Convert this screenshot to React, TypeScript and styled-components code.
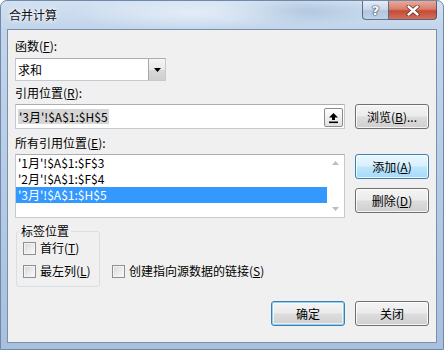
import { FC, ReactNode } from "react";
import styled, { createGlobalStyle, css } from "styled-components";

const GlobalStyle = createGlobalStyle`
    html, body {
        margin: 0;
        padding: 0;
        background: #ffffff;
    }
    body {
        font-family: "Noto Sans CJK SC", "Noto Sans", sans-serif;
        font-size: 12px;
        color: #000000;
    }
    * {
        box-sizing: border-box;
    }
`;

const Window = styled.div`
    width: 444px;
    height: 350px;
    display: flex;
    flex-direction: column;
    border: 1px solid #7089a8;
    border-radius: 7px 7px 0 0;
    overflow: hidden;
    background:
        radial-gradient(ellipse 120px 18px at 190px 12px, rgba(235, 242, 250, 0.75), transparent),
        radial-gradient(ellipse 90px 14px at 300px 10px, rgba(150, 178, 210, 0.5), transparent),
        linear-gradient(180deg, #d3e1f1 0%, #c2d5eb 8%, #b6cce6 50%, #a8c0de 100%);
`;

const TitleBar = styled.div`
    height: 28px;
    display: flex;
    align-items: flex-start;
    justify-content: space-between;
    padding: 0 6px 0 8px;
`;

const Title = styled.span`
    line-height: 28px;
    font-size: 12px;
    color: #111111;
    text-shadow: 0 0 6px rgba(255, 255, 255, 0.95), 0 0 3px rgba(255, 255, 255, 0.9);
`;

const CaptionGroup = styled.div`
    display: flex;
`;

const CaptionButton = styled.div<{ $close?: boolean }>`
    height: 19px;
    display: flex;
    align-items: center;
    justify-content: center;
    border: 1px solid rgba(55, 75, 105, 0.75);
    border-top: 0;
    ${({ $close }) =>
        $close
            ? css`
                  width: 48px;
                  border-left: 0;
                  border-radius: 0 0 4px 0;
                  background: linear-gradient(180deg, #e9a999 0%, #d7806e 45%, #c64a35 55%, #d1715c 100%);
              `
            : css`
                  width: 27px;
                  border-radius: 0 0 0 4px;
                  background: linear-gradient(180deg, #e4ecf6 0%, #cbd9ea 45%, #b3c6dd 55%, #c0d1e6 100%);
              `}
`;

const HelpGlyph = styled.span`
    font-family: "DejaVu Sans", sans-serif;
    font-weight: bold;
    font-size: 13px;
    line-height: 1;
    color: #ffffff;
    text-shadow: 0 0 1px #344a66, 0 0 1px #344a66, 0 0 2px #344a66;
`;

const Client = styled.div`
    margin: 0 6px;
    height: 314px;
    background: #f0f0f0;
    border: 1px solid #7d8fa7;
    display: flex;
    flex-direction: column;
    padding: 9px 7px 0 7px;
`;

const FieldLabel = styled.div<{ $gap?: number }>`
    line-height: 14px;
    height: 14px;
    margin-top: ${({ $gap }) => $gap ?? 0}px;
    white-space: nowrap;
`;

const Row = styled.div<{ $gap: number }>`
    display: flex;
    justify-content: space-between;
    align-items: flex-start;
    margin-top: ${({ $gap }) => $gap}px;
`;

const fieldBorder = css`
    border: 1px solid #c5cad2;
    border-top-color: #abadb3;
    background: #ffffff;
`;

const SelectBox = styled.div`
    ${fieldBorder};
    margin-top: 5px;
    width: 151px;
    height: 23px;
    display: flex;
    align-items: stretch;
`;

const SelectValue = styled.span`
    flex: 1;
    padding-left: 2px;
    line-height: 21px;
`;

const DropButton = styled.span`
    width: 17px;
    display: flex;
    align-items: center;
    justify-content: center;
    border-left: 1px solid #a7a7a7;
    background: linear-gradient(180deg, #f6f6f6 0%, #e8e8e8 50%, #d8d8d8 51%, #cfcfcf 100%);
`;

const TextInput = styled.div`
    ${fieldBorder};
    width: 330px;
    height: 25px;
    display: flex;
    align-items: center;
    justify-content: space-between;
    padding: 0 1px 0 2px;
`;

const SelectedText = styled.span`
    background: #d6d6d6;
    line-height: 15px;
    padding: 0 1px;
`;

const CollapseButton = styled.span`
    width: 19px;
    height: 19px;
    margin-top: 2px;
    display: flex;
    align-items: center;
    justify-content: center;
    border: 1px solid #8a8a8a;
    border-radius: 2px;
    background: linear-gradient(180deg, #ffffff 0%, #f0f0f0 50%, #e2e2e2 100%);
`;

const ListBox = styled.div`
    ${fieldBorder};
    width: 330px;
    height: 64px;
    display: flex;
`;

const ListItems = styled.div`
    flex: 1;
    display: flex;
    flex-direction: column;
`;

const ListItem = styled.div<{ $selected?: boolean }>`
    line-height: 16px;
    height: 16px;
    padding-left: 2px;
    ${({ $selected }) =>
        $selected &&
        css`
            background: #3399ff;
            color: #ffffff;
        `}
`;

const ScrollTrack = styled.div`
    width: 17px;
    display: flex;
    flex-direction: column;
    justify-content: space-between;
    align-items: center;
    padding: 6px 0 6px;
`;

const ButtonStack = styled.div`
    display: flex;
    flex-direction: column;
    gap: 9px;
`;

const DialogButton = styled.div<{ $variant?: "normal" | "hot" | "default" }>`
    width: 74px;
    height: 25px;
    display: flex;
    align-items: center;
    justify-content: center;
    border-radius: 3px;
    white-space: nowrap;
    border: 1px solid #707070;
    box-shadow: inset 0 0 0 1px rgba(255, 255, 255, 0.75);
    background: linear-gradient(180deg, #f4f4f4 0%, #ebebeb 48%, #dddddd 52%, #cfcfcf 100%);
    ${({ $variant }) =>
        $variant === "hot" &&
        css`
            border-color: #3c7fb1;
            background: linear-gradient(180deg, #eaf6fd 0%, #d9f0fc 48%, #bee6fd 52%, #a7d9f5 100%);
        `}
    ${({ $variant }) =>
        $variant === "default" &&
        css`
            border-color: #3c7fb1;
            box-shadow: inset 0 0 0 1px #8fd3f4, inset 0 0 0 2px rgba(255, 255, 255, 0.6);
        `}
`;

const Ul = styled.span`
    text-decoration: underline;
    text-underline-offset: 1px;
`;

const LowerSection = styled.div`
    display: flex;
    align-items: flex-end;
    margin-top: 6px;
`;

const Group = styled.fieldset`
    margin: 0 0 0 1px;
    padding: 0 0 7px 6px;
    width: 84px;
    min-inline-size: 0;
    border: 1px solid #d5dfe5;
    border-radius: 3px;
    display: flex;
    flex-direction: column;
    gap: 7px;
`;

const GroupLegend = styled.legend`
    margin-left: -4px;
    padding: 0 2px;
    line-height: 14px;
    white-space: nowrap;
    margin-bottom: 2px;
`;

const CheckRow = styled.div<{ $standalone?: boolean }>`
    display: flex;
    align-items: center;
    gap: 4px;
    height: 16px;
    line-height: 16px;
    white-space: nowrap;
    ${({ $standalone }) =>
        $standalone &&
        css`
            margin: 0 0 8px 12px;
        `}
`;

const CheckBox = styled.span`
    width: 13px;
    height: 13px;
    border: 1px solid #8e8f8f;
    background: linear-gradient(135deg, #d6d6d6 0%, #ececec 55%, #fafafa 100%);
    box-shadow: inset 0 0 0 1px #f4f4f4;
    flex-shrink: 0;
`;

const FooterRow = styled.div`
    display: flex;
    justify-content: flex-end;
    gap: 10px;
    margin-top: 14px;
`;

const Check: FC<{ children: ReactNode; standalone?: boolean }> = ({ children, standalone }) => (
    <CheckRow $standalone={standalone}>
        <CheckBox />
        <span>{children}</span>
    </CheckRow>
);

const App: FC = () => {
    return (
        <>
            <GlobalStyle />
            <Window>
                <TitleBar>
                    <Title>合并计算</Title>
                    <CaptionGroup>
                        <CaptionButton>
                            <HelpGlyph>?</HelpGlyph>
                        </CaptionButton>
                        <CaptionButton $close>
                            <svg width="14" height="11" viewBox="0 0 14 11">
                                <path
                                    d="M2.5 1.5 L11.5 9.5 M11.5 1.5 L2.5 9.5"
                                    stroke="#6b2a22"
                                    strokeWidth="4"
                                    strokeLinecap="round"
                                />
                                <path
                                    d="M2.5 1.5 L11.5 9.5 M11.5 1.5 L2.5 9.5"
                                    stroke="#ffffff"
                                    strokeWidth="2.4"
                                    strokeLinecap="round"
                                />
                            </svg>
                        </CaptionButton>
                    </CaptionGroup>
                </TitleBar>
                <Client>
                    <FieldLabel>
                        函数(<Ul>F</Ul>):
                    </FieldLabel>
                    <SelectBox>
                        <SelectValue>求和</SelectValue>
                        <DropButton>
                            <svg width="7" height="4" viewBox="0 0 7 4">
                                <path d="M0 0 H7 L3.5 4 Z" fill="#000000" />
                            </svg>
                        </DropButton>
                    </SelectBox>
                    <FieldLabel $gap={5}>
                        引用位置(<Ul>R</Ul>):
                    </FieldLabel>
                    <Row $gap={4}>
                        <TextInput>
                            <SelectedText>'3月'!$A$1:$H$5</SelectedText>
                            <CollapseButton>
                                <svg width="11" height="12" viewBox="0 0 11 12">
                                    <path d="M5.5 1 L10 5.5 H7 V8 H4 V5.5 H1 Z" fill="#000000" />
                                    <rect x="1" y="9.5" width="9" height="1.6" fill="#000000" />
                                </svg>
                            </CollapseButton>
                        </TextInput>
                        <DialogButton>
                            浏览(<Ul>B</Ul>)...
                        </DialogButton>
                    </Row>
                    <FieldLabel $gap={7}>
                        所有引用位置(<Ul>E</Ul>):
                    </FieldLabel>
                    <Row $gap={4}>
                        <ListBox>
                            <ListItems>
                                <ListItem>'1月'!$A$1:$F$3</ListItem>
                                <ListItem>'2月'!$A$1:$F$4</ListItem>
                                <ListItem $selected>'3月'!$A$1:$H$5</ListItem>
                            </ListItems>
                            <ScrollTrack>
                                <svg width="7" height="4" viewBox="0 0 7 4">
                                    <path d="M0 4 H7 L3.5 0 Z" fill="#bdbdbd" />
                                </svg>
                                <svg width="7" height="4" viewBox="0 0 7 4">
                                    <path d="M0 0 H7 L3.5 4 Z" fill="#bdbdbd" />
                                </svg>
                            </ScrollTrack>
                        </ListBox>
                        <ButtonStack>
                            <DialogButton $variant="hot">
                                添加(<Ul>A</Ul>)
                            </DialogButton>
                            <DialogButton>
                                删除(<Ul>D</Ul>)
                            </DialogButton>
                        </ButtonStack>
                    </Row>
                    <LowerSection>
                        <Group>
                            <GroupLegend>标签位置</GroupLegend>
                            <Check>
                                首行(<Ul>T</Ul>)
                            </Check>
                            <Check>
                                最左列(<Ul>L</Ul>)
                            </Check>
                        </Group>
                        <Check standalone>
                            创建指向源数据的链接(<Ul>S</Ul>)
                        </Check>
                    </LowerSection>
                    <FooterRow>
                        <DialogButton $variant="default">确定</DialogButton>
                        <DialogButton>关闭</DialogButton>
                    </FooterRow>
                </Client>
            </Window>
        </>
    );
};

export default App;
